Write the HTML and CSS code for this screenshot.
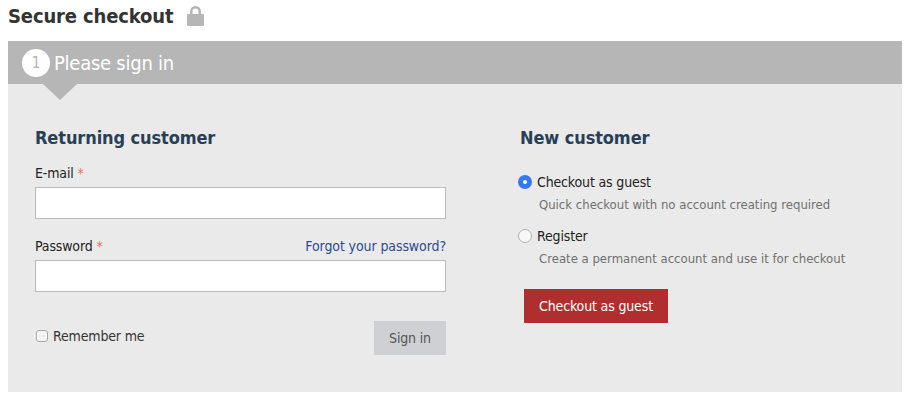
FILE: index.html
```html
<!doctype html>
<html lang="en">
<head>
<meta charset="UTF-8">
<title>Secure checkout</title>
<link rel="stylesheet" href="styles.css">
</head>
<body>
<h1 class="page-title">Secure checkout
  <svg class="lock" width="17" height="20" viewBox="0 0 17 20"><path fill="#b6b6b6" d="M1 8H3V5.500a5.500 5.500 0 0 1 11 0V8h2a1 1 0 0 1 1 1V19a1 1 0 0 1-1 1H1a1 1 0 0 1-1-1V9a1 1 0 0 1 1-1zM5.500 8h6V5.500a3 3 0 0 0-6 0z"/></svg>
</h1>
<section class="step">
  <div class="step-head"><span class="step-num">1</span><span class="step-title">Please sign in</span></div>
  <div class="step-body">
    <form class="col col-left">
      <h2>Returning customer</h2>
      <div class="field">
        <div class="field-label"><label for="email">E-mail <span class="req">*</span></label></div>
        <input id="email" type="text">
      </div>
      <div class="field">
        <div class="field-label"><label for="password">Password <span class="req">*</span></label><a href="#">Forgot your password?</a></div>
        <input id="password" type="password">
      </div>
      <div class="form-foot">
        <label class="remember"><input type="checkbox"> Remember me</label>
        <button type="button" class="btn btn-grey">Sign in</button>
      </div>
    </form>
    <form class="col col-right">
      <h2>New customer</h2>
      <label class="opt"><input type="radio" name="mode" checked> Checkout as guest</label>
      <p class="hint">Quick checkout with no account creating required</p>
      <label class="opt"><input type="radio" name="mode"> Register</label>
      <p class="hint">Create a permanent account and use it for checkout</p>
      <button type="button" class="btn btn-red">Checkout as guest</button>
    </form>
  </div>
</section>
</body>
</html>
```

FILE: styles.css
```css
body {
  margin: 0 3px 0 8px;
  font-family: "DejaVu Sans", "Noto Sans", sans-serif;
  font-stretch: condensed;
  font-size: 14px;
  letter-spacing: -0.15px;
  color: #222;
}
h1, h2, p {
  margin: 0;
}
.page-title {
  display: flex;
  align-items: center;
  gap: 14px;
  height: 41px;
  padding-bottom: 9px;
  box-sizing: border-box;
  font-size: 20px;
  letter-spacing: -0.14px;
  color: #333;
}
.step {
  background: #eaeaea;
  height: 351px;
}
.step-head {
  position: relative;
  display: flex;
  align-items: center;
  gap: 4px;
  height: 43px;
  padding-left: 14px;
  background: #b6b6b6;
  color: #fff;
  font-size: 20px;
  letter-spacing: -0.25px;
}
.step-head::after {
  content: "";
  position: absolute;
  left: 35px;
  top: 43px;
  border-left: 17px solid transparent;
  border-right: 17px solid transparent;
  border-top: 16px solid #b6b6b6;
}
.step-num {
  width: 28px;
  height: 28px;
  border-radius: 50%;
  background: #fff;
  color: #b6b6b6;
  font-size: 16px;
  line-height: 28px;
  text-align: center;
}
.step-body {
  display: flex;
  padding-top: 43px;
}
.col-left {
  width: 411px;
  margin-left: 27px;
}
.col-right {
  margin-left: 73px;
}
h2 {
  font-size: 18px;
  line-height: 21px;
  letter-spacing: -0.1px;
  color: #283f58;
}
.field-label {
  display: flex;
  justify-content: space-between;
  line-height: 18px;
  margin-bottom: 5px;
}
.col-left h2 {
  margin-bottom: 16px;
}
.field {
  margin-bottom: 18px;
}
.field input {
  display: block;
  box-sizing: border-box;
  width: 100%;
  height: 32px;
  border: 1px solid #bbb;
  background: #fff;
  padding: 0 8px;
}
.req {
  color: #ee6b63;
}
a {
  color: #2f4a8f;
  letter-spacing: -0.1px;
  text-decoration: none;
}
.form-foot {
  display: flex;
  justify-content: space-between;
  align-items: center;
  margin-top: 29px;
}
.remember {
  display: flex;
  align-items: center;
  gap: 5px;
  color: #333;
  margin-top: -4px;
}
.remember input {
  appearance: none;
  box-sizing: border-box;
  margin: 0 0 0 1px;
  width: 12px;
  height: 12px;
  border: 1px solid #a8a8a8;
  border-radius: 3px;
  background: #f4f4f4;
}
.btn {
  border: 0;
  font: inherit;
  font-stretch: inherit;
  letter-spacing: inherit;
  height: 34px;
}
.btn-grey {
  width: 72px;
  background: #cfd0d3;
  color: #555;
}
.btn-red {
  display: block;
  width: 144px;
  margin: 21px 0 0 5px;
  background: #b12e2e;
  color: #fff;
}
.col-right h2 {
  margin-bottom: 25px;
  padding-left: 1px;
}
.opt {
  display: flex;
  align-items: center;
  gap: 5px;
  line-height: 18px;
}
.opt input {
  appearance: none;
  box-sizing: border-box;
  margin: 0 0 0 -1px;
  width: 14px;
  height: 14px;
  border: 1px solid #b0b0b0;
  border-radius: 50%;
  background: #f8f8f8;
}
.opt input:checked {
  border: 5px solid #3478f6;
  background: #fff;
}
.hint {
  margin: 5px 0 13px 20px;
  line-height: 18px;
  color: #707070;
  font-size: 13px;
  letter-spacing: 0;
}
```
